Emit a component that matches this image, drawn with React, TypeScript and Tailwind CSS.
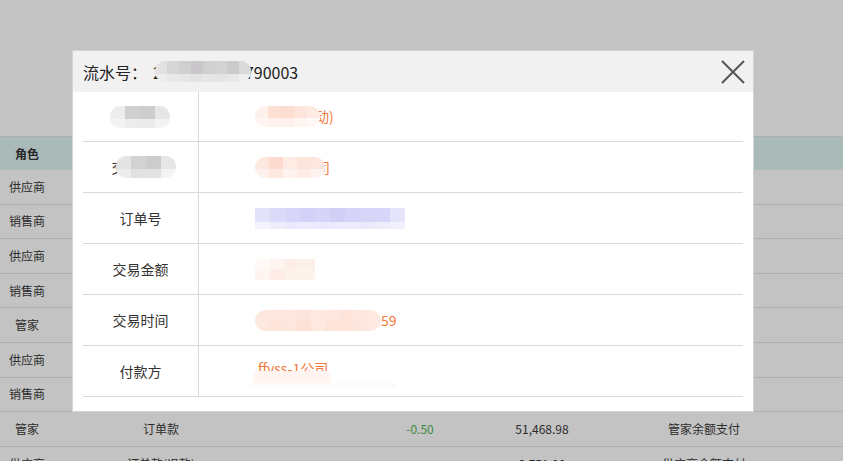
import React from 'react';

const FONT = { fontFamily: '"Noto Sans CJK SC", "Noto Sans", sans-serif' };

// background list rows (mostly hidden under the modal)
const rows = [
  { role: '供应商', type: '订单款', change: '+1,200.00', balance: '12,300.00', note: '供应商余额支付' },
  { role: '销售商', type: '订单款', change: '-1,200.00', balance: '8,420.50', note: '销售商余额支付' },
  { role: '供应商', type: '订单款', change: '+320.00', balance: '13,500.00', note: '供应商余额支付' },
  { role: '销售商', type: '订单款', change: '-320.00', balance: '7,100.50', note: '销售商余额支付' },
  { role: '管家', type: '订单款', change: '+0.50', balance: '51,469.48', note: '管家余额支付' },
  { role: '供应商', type: '订单款', change: '+88.00', balance: '13,820.00', note: '供应商余额支付' },
  { role: '销售商', type: '订单款', change: '-88.00', balance: '6,780.50', note: '销售商余额支付' },
  { role: '管家', type: '订单款', change: '-0.50', balance: '51,468.98', note: '管家余额支付' },
  { role: '供应商', type: '订单款(退款)', change: '', balance: '3,751.00', note: '供应商余额支付' },
];

const COLS = 'grid grid-cols-[54px_214px_92px_120px_124px_200px_1fr]';

// pixelated privacy blur, drawn as small tiles
const Mosaic = ({
  top,
  bottom,
  cell,
  topH,
  bottomH,
  className,
}: {
  top: string[];
  bottom: string[];
  cell: number;
  topH: number;
  bottomH: number;
  className?: string;
}) => (
  <div className={`relative z-10 flex flex-col overflow-hidden rounded-[10px] shrink-0 ${className || ''}`}>
    <div className="flex">
      {top.map((c, i) => (
        <div key={i} style={{ background: c, width: cell, height: topH }} />
      ))}
    </div>
    <div className="flex">
      {bottom.map((c, i) => (
        <div key={i} style={{ background: c, width: cell, height: bottomH }} />
      ))}
    </div>
  </div>
);

const DetailRow = ({ label, children }: { label: React.ReactNode; children: React.ReactNode }) => (
  <div className="flex h-[51px] border-b border-[#d9d9d9]">
    <div className="w-[116px] shrink-0 border-r border-[#d9d9d9] flex items-center justify-center text-[14px] text-[#333]">
      {label}
    </div>
    <div className="flex-1 flex items-center pl-[56px] text-[14px] text-[#f47a3c]">{children}</div>
  </div>
);

export default function App() {
  return (
    <div className="relative w-full h-[461px] overflow-hidden bg-white" style={FONT}>
      {/* page underneath */}
      <div className="pt-[136px]">
        <div className={`${COLS} h-[34px] border-t border-[#e2e2e2] bg-[#def3f2] text-[12px] font-bold text-[#333]`}>
          <div className="flex items-center justify-center">角色</div>
          <div className="flex items-center justify-center">类型</div>
          <div className="flex items-center justify-center">单号</div>
          <div className="flex items-center justify-center">金额</div>
          <div className="flex items-center justify-center">余额</div>
          <div className="flex items-center justify-center">备注</div>
          <div />
        </div>
        {rows.map((r, i) => (
          <div key={i} className={`${COLS} h-[34.6px] border-b border-[#e2e2e2] text-[12px] text-[#3a3a3a]`}>
            <div className="flex items-center justify-center">{r.role}</div>
            <div className="flex items-center justify-center">{r.type}</div>
            <div />
            <div className={`flex items-center justify-center ${r.change.startsWith('-') ? 'text-[#52b556]' : 'text-[#e4572e]'}`}>
              {r.change}
            </div>
            <div className="flex items-center justify-center">{r.balance}</div>
            <div className="flex items-center justify-center">{r.note}</div>
            <div />
          </div>
        ))}
      </div>

      {/* mask */}
      <div className="absolute inset-0 bg-black/[0.235]" />

      {/* modal */}
      <div className="absolute left-[72px] top-[50px] w-[682px] h-[362px] bg-white border border-[#d4d4d4] flex flex-col">
        <div className="h-[41px] shrink-0 bg-[#f1f1f1] flex items-center justify-between pl-[10px] pr-[8px]">
          <div className="flex items-center text-[16px] text-[#222]">
            <span>流水号：</span>
            <span className="ml-[6px]">2</span>
            <Mosaic
              className="-ml-[7px]"
              cell={12}
              topH={13}
              bottomH={8}
              top={['#e2e2e2', '#d6d6d6', '#cfcfcf', '#c9c7c9', '#d0d0d0', '#d3d3d3', '#cbcbcb', '#dadada']}
              bottom={['#ececec', '#e8e8e8', '#e6e6e6', '#e3e3e3', '#e6e6e6', '#e4e4e4', '#e8e8e8', '#efefef']}
            />
            <span className="-ml-[6px]">790003</span>
          </div>
          <svg width="24" height="24" viewBox="0 0 24 24" className="shrink-0">
            <path d="M1 1L23 23M23 1L1 23" stroke="#555" strokeWidth="2" fill="none" />
          </svg>
        </div>

        <div className="px-[10px]">
          <div className="flex h-[50px] border-b border-[#d9d9d9]">
            <div className="w-[116px] shrink-0 border-r border-[#d9d9d9] flex items-center justify-center">
              <Mosaic
                className="ml-[-2px]"
                cell={15}
                topH={13}
                bottomH={9}
                top={['#ededed', '#d0d0d0', '#cdcdcd', '#e6e6e6']}
                bottom={['#f3f3f3', '#ececec', '#ebebeb', '#f3f3f3']}
              />
            </div>
            <div className="flex-1 flex items-center pl-[56px] text-[14px] text-[#f47a3c]">
              <Mosaic
                cell={13}
                topH={12}
                bottomH={9}
                top={['#fef0ea', '#fde0d3', '#fdddd0', '#fde5dc', '#fdebe4']}
                bottom={['#fff6f3', '#fef1ec', '#fef1ec', '#fef4f0', '#fff8f6']}
              />
              <span className="-ml-[5px]">动)</span>
            </div>
          </div>

          <DetailRow
            label={
              <span className="flex items-center ml-[6px]">
                <span>交</span>
                <Mosaic
                  className="-ml-[10px]"
                  cell={15}
                  topH={13}
                  bottomH={9}
                  top={['#e4e4e4', '#d2d2d2', '#cccccc', '#e6e6e6']}
                  bottom={['#ececec', '#e2e2e2', '#e2e2e2', '#f3f3f3']}
                />
              </span>
            }
          >
            <Mosaic
              cell={14}
              topH={12}
              bottomH={9}
              top={['#fde8e0', '#fddccf', '#feebe4', '#fde4da', '#fde6dd']}
              bottom={['#fef1ec', '#fee9e1', '#fef2ee', '#feede6', '#fef3ef']}
            />
            <span className="-ml-[9px]">司</span>
          </DetailRow>

          <DetailRow label="订单号">
            <Mosaic
              className="rounded-none"
              cell={15}
              topH={14}
              bottomH={7}
              top={['#e3e2fb', '#dcdaf9', '#d8d6f8', '#d3d1f7', '#d6d4f8', '#d1cff6', '#d5d3f7', '#d8d6f8', '#d7d5f8', '#e6e4fb']}
              bottom={['#f4f3fd', '#eeedfc', '#ebeafc', '#edecfc', '#ebeafc', '#eceafc', '#edecfc', '#ebeafb', '#eeedfc', '#f1f0fd']}
            />
          </DetailRow>

          <DetailRow label="交易金额">
            <Mosaic
              className="rounded-none"
              cell={15}
              topH={10}
              bottomH={11}
              top={['#fffaf8', '#fef5f1', '#fdeee8', '#fdf0ea']}
              bottom={['#fef4f0', '#fdede6', '#fef2ed', '#fef2ed']}
            />
          </DetailRow>

          <DetailRow label="交易时间">
            <Mosaic
              cell={14}
              topH={10}
              bottomH={11}
              top={['#fde8e0', '#fde6dd', '#fde7df', '#fde4da', '#fee9e2', '#fde7df', '#fee5dc', '#fde8e0', '#fee9e2']}
              bottom={['#fde8e0', '#fde5dc', '#fde6dd', '#fde2d8', '#fee8e0', '#fde4da', '#fde3d9', '#fde6dd', '#feeae3']}
            />
            <span>59</span>
          </DetailRow>

          <DetailRow label="付款方">
            <span className="relative -mt-[6px] ml-[3px]">
              ffyss-1公司
              <span className="absolute left-[-4px] top-[13px] w-[76px] h-[16px] bg-[#fff4ef]" />
              <span className="absolute left-[-12px] top-[25px] w-[150px] h-[4px] bg-[#fdfafa]" />
            </span>
          </DetailRow>
        </div>
      </div>
    </div>
  );
}
